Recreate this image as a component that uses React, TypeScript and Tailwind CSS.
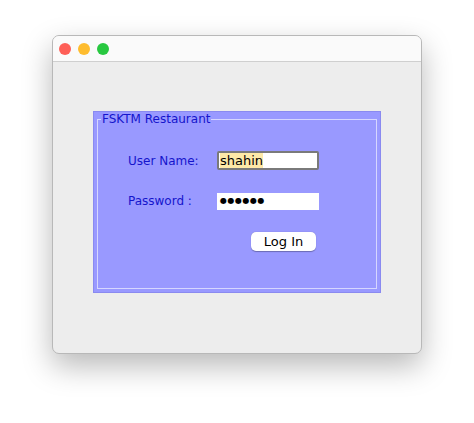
import * as React from "react";

export default function App() {
  return (
    <div className="w-[474px] h-[423px] bg-white pt-[35px] pl-[52px] font-['DejaVu_Sans',sans-serif]">
      <div className="w-[370px] h-[319px] rounded-[7px] bg-[#ededed] border border-[#b8b8b8] shadow-[0_12px_30px_rgba(0,0,0,0.28)] overflow-hidden flex flex-col">
        <div className="h-[26px] bg-[#fafafa] border-b border-[#cfcfcf] flex items-center gap-[7px] pl-[6px]">
          <span className="w-[12px] h-[12px] rounded-full bg-[#fe5f57]" />
          <span className="w-[12px] h-[12px] rounded-full bg-[#febc2e]" />
          <span className="w-[12px] h-[12px] rounded-full bg-[#28c840]" />
        </div>
        <div className="flex-1 pt-[49px] pl-[40px]">
          <div className="w-[288px] h-[182px] bg-[#9999ff] border border-[#8a8af0] px-[3px] pt-0 pb-[3px]">
            <fieldset className="h-full border border-[#d6d6ff] pl-[30px] pr-[28px] pb-0 m-0">
              <legend className="text-[12px] text-[#1515cc] px-[1px] ml-[-27px] leading-[14px]">
                FSKTM Restaurant
              </legend>
              <div className="grid grid-cols-[89px_102px] items-center gap-y-[22px] mt-[25px] text-[12px] text-[#1515cc]">
                <span>User Name:</span>
                <div className="h-[19px] bg-white border-2 border-[#7a7a7a] rounded-[2px] flex items-center pl-[1px] text-[13px] text-black">
                  <span className="bg-[#fde9a8] leading-[15px]">shahin</span>
                </div>
                <span>Password :</span>
                <div className="h-[17px] bg-white flex items-center pl-[3px] text-[8px] text-black tracking-[0.5px] leading-none">
                  ●●●●●●
                </div>
              </div>
              <div className="flex mt-[22px] ml-[123px]">
                <button className="w-[65px] h-[19px] bg-white rounded-[5px] text-[13px] text-black leading-none shadow-[0_0.5px_1px_rgba(0,0,0,0.3)]">
                  Log In
                </button>
              </div>
            </fieldset>
          </div>
        </div>
      </div>
    </div>
  );
}
